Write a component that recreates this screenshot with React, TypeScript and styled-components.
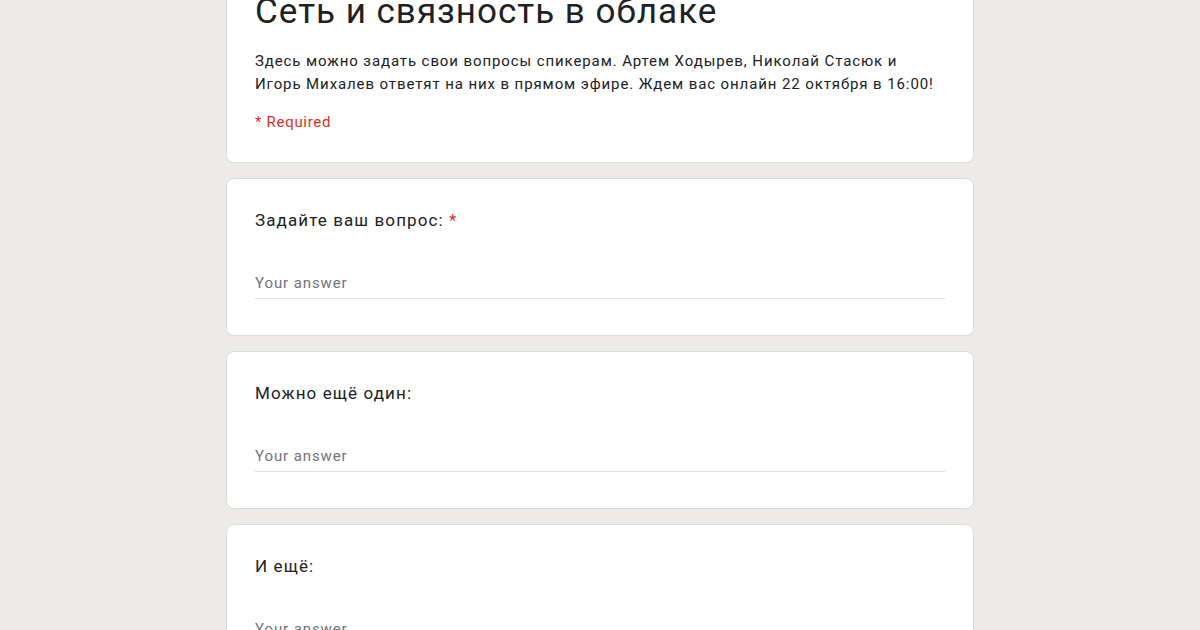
import React from 'react';
import styled, { createGlobalStyle } from 'styled-components';

const questions = [
  { label: 'Задайте ваш вопрос:', required: true },
  { label: 'Можно ещё один:', required: false },
  { label: 'И ещё:', required: false },
];

export default function App(): JSX.Element {
  return (
    <>
      <Global />
      <Page>
        <Column>
          <Card>
            <Title>Сеть и связность в облаке</Title>
            <Description>
              Здесь можно задать свои вопросы спикерам. Артем Ходырев, Николай Стасюк и
              <br />
              Игорь Михалев ответят на них в прямом эфире. Ждем вас онлайн 22 октября в 16:00!
            </Description>
            <Required>* Required</Required>
          </Card>
          {questions.map((q) => (
            <QuestionCard key={q.label}>
              <Label>
                {q.label}
                {q.required && <Star> *</Star>}
              </Label>
              <Answer placeholder="Your answer" />
            </QuestionCard>
          ))}
        </Column>
      </Page>
    </>
  );
}

const Global = createGlobalStyle`
  body {
    margin: 0;
    background: #edebe7;
    font-family: Roboto, "Liberation Sans", sans-serif;
    color: #202124;
  }
`;

const Page = styled.div`
  height: 630px;
  overflow: hidden;
`;

const Column = styled.div`
  width: 748px;
  margin: -33px auto 0;
  display: flex;
  flex-direction: column;
  gap: 15px;
`;

const Card = styled.section`
  background: #fff;
  border: 1px solid #dadce0;
  border-radius: 8px;
  padding: 24px 28px 30px;
`;

const Title = styled.h1`
  margin: 0;
  font-family: Roboto, "Liberation Sans", sans-serif;
  font-weight: 400;
  font-size: 35px;
  line-height: 40px;
  letter-spacing: 1px;
  color: #202124;
`;

const Description = styled.p`
  margin: 18px 0 0;
  font-size: 15px;
  line-height: 23px;
  letter-spacing: 0.9px;
`;

const Required = styled.div`
  margin-top: 16px;
  font-size: 15px;
  line-height: 20px;
  letter-spacing: 0.7px;
  color: #d93025;
`;

const QuestionCard = styled(Card)`
  padding: 29px 28px 36px;
`;

const Label = styled.div`
  font-size: 17px;
  line-height: 24px;
  letter-spacing: 1.1px;
`;

const Star = styled.span`
  color: #d93025;
`;

const Answer = styled.input`
  display: block;
  width: 100%;
  box-sizing: border-box;
  margin-top: 34px;
  height: 33px;
  padding: 2px 0 0;
  border: none;
  border-bottom: 1px solid #e0e0e0;
  outline: none;
  font-family: Roboto, "Liberation Sans", sans-serif;
  font-size: 15px;
  letter-spacing: 0.9px;
  color: #202124;

  &::placeholder {
    color: #70757a;
  }
`;
